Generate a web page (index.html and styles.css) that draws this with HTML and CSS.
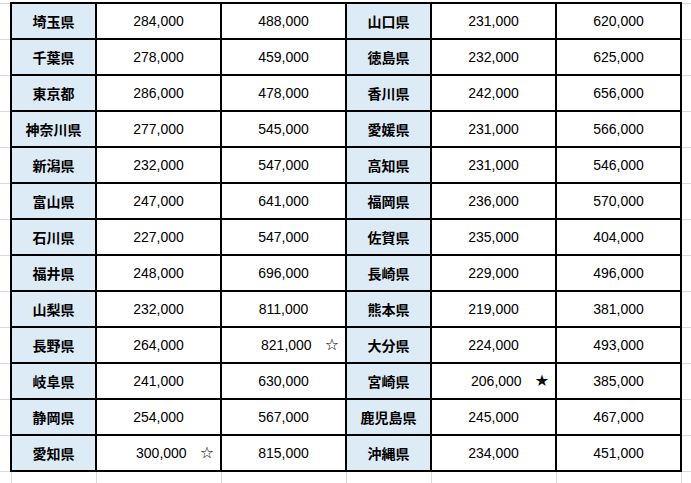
FILE: index.html
```html
<!DOCTYPE html>
<html lang="ja">
<head>
<meta charset="utf-8">
<title>都道府県別データ</title>
<link rel="stylesheet" href="styles.css">
</head>
<body>
<table class="sheet">
  <colgroup>
    <col class="c-stub-l">
    <col class="c-pref">
    <col class="c-num">
    <col class="c-num">
    <col class="c-pref">
    <col class="c-num">
    <col class="c-num">
    <col class="c-stub-r">
  </colgroup>
  <tbody>
    <tr><td class="stub stub-l"></td><th class="pref">埼玉県</th><td>284,000</td><td>488,000</td><th class="pref">山口県</th><td>231,000</td><td>620,000</td><td class="stub stub-r"></td></tr>
    <tr><td class="stub stub-l"></td><th class="pref">千葉県</th><td>278,000</td><td>459,000</td><th class="pref">徳島県</th><td>232,000</td><td>625,000</td><td class="stub stub-r"></td></tr>
    <tr><td class="stub stub-l"></td><th class="pref">東京都</th><td>286,000</td><td>478,000</td><th class="pref">香川県</th><td>242,000</td><td>656,000</td><td class="stub stub-r"></td></tr>
    <tr><td class="stub stub-l"></td><th class="pref">神奈川県</th><td>277,000</td><td>545,000</td><th class="pref">愛媛県</th><td>231,000</td><td>566,000</td><td class="stub stub-r"></td></tr>
    <tr><td class="stub stub-l"></td><th class="pref">新潟県</th><td>232,000</td><td>547,000</td><th class="pref">高知県</th><td>231,000</td><td>546,000</td><td class="stub stub-r"></td></tr>
    <tr><td class="stub stub-l"></td><th class="pref">富山県</th><td>247,000</td><td>641,000</td><th class="pref">福岡県</th><td>236,000</td><td>570,000</td><td class="stub stub-r"></td></tr>
    <tr><td class="stub stub-l"></td><th class="pref">石川県</th><td>227,000</td><td>547,000</td><th class="pref">佐賀県</th><td>235,000</td><td>404,000</td><td class="stub stub-r"></td></tr>
    <tr><td class="stub stub-l"></td><th class="pref">福井県</th><td>248,000</td><td>696,000</td><th class="pref">長崎県</th><td>229,000</td><td>496,000</td><td class="stub stub-r"></td></tr>
    <tr><td class="stub stub-l"></td><th class="pref">山梨県</th><td>232,000</td><td>811,000</td><th class="pref">熊本県</th><td>219,000</td><td>381,000</td><td class="stub stub-r"></td></tr>
    <tr><td class="stub stub-l"></td><th class="pref">長野県</th><td>264,000</td><td class="mark">821,000<span class="star">☆</span></td><th class="pref">大分県</th><td>224,000</td><td>493,000</td><td class="stub stub-r"></td></tr>
    <tr><td class="stub stub-l"></td><th class="pref">岐阜県</th><td>241,000</td><td>630,000</td><th class="pref">宮崎県</th><td class="mark">206,000<span class="star">★</span></td><td>385,000</td><td class="stub stub-r"></td></tr>
    <tr><td class="stub stub-l"></td><th class="pref">静岡県</th><td>254,000</td><td>567,000</td><th class="pref">鹿児島県</th><td>245,000</td><td>467,000</td><td class="stub stub-r"></td></tr>
    <tr><td class="stub stub-l"></td><th class="pref">愛知県</th><td class="mark">300,000<span class="star">☆</span></td><td>815,000</td><th class="pref">沖縄県</th><td>234,000</td><td>451,000</td><td class="stub stub-r"></td></tr>
    <tr class="tail"><td class="stub stub-l"></td><td></td><td></td><td></td><td></td><td></td><td></td><td class="stub stub-r"></td></tr>
  </tbody>
</table>
</body>
</html>
```
FILE: styles.css
```css
html, body {
  margin: 0;
  padding: 0;
  background: #ffffff;
}

body {
  width: 691px;
  height: 483px;
  overflow: hidden;
}

.sheet {
  border-collapse: collapse;
  table-layout: fixed;
  width: 691px;
  margin-top: 2px;
  font-family: "Liberation Sans", Arial, sans-serif;
  font-size: 14px;
  color: #000000;
}

.c-stub-l { width: 11px; }
.c-pref { width: 85px; }
.c-num { width: 125px; }
.c-stub-r { width: 10px; }

.sheet td,
.sheet th {
  padding: 0;
  height: 34px;
  border: 2px solid #000000;
  text-align: center;
  vertical-align: middle;
  font-weight: 400;
  white-space: nowrap;
  line-height: 16px;
}

.sheet .stub {
  border: 1px solid #d9d9d9;
}

.sheet .stub-l {
  border-left: none;
}

.sheet .stub-r {
  border-right: none;
}

.sheet .pref {
  background: #ddebf7;
  font-family: "Noto Sans CJK JP", "Noto Sans CJK SC", sans-serif;
  font-weight: 700;
  font-size: 14px;
}

.sheet .tail td {
  height: 30px;
  border: 1px solid #d9d9d9;
  border-bottom: none;
}

.sheet .tail .stub-l {
  border-left: none;
}

.sheet .tail .stub-r {
  border-right: none;
}

.sheet .mark {
  text-align: right;
  padding-right: 6px;
}

.star {
  font-family: "DejaVu Sans", sans-serif;
  font-size: 16px;
  margin-left: 13px;
}
```
